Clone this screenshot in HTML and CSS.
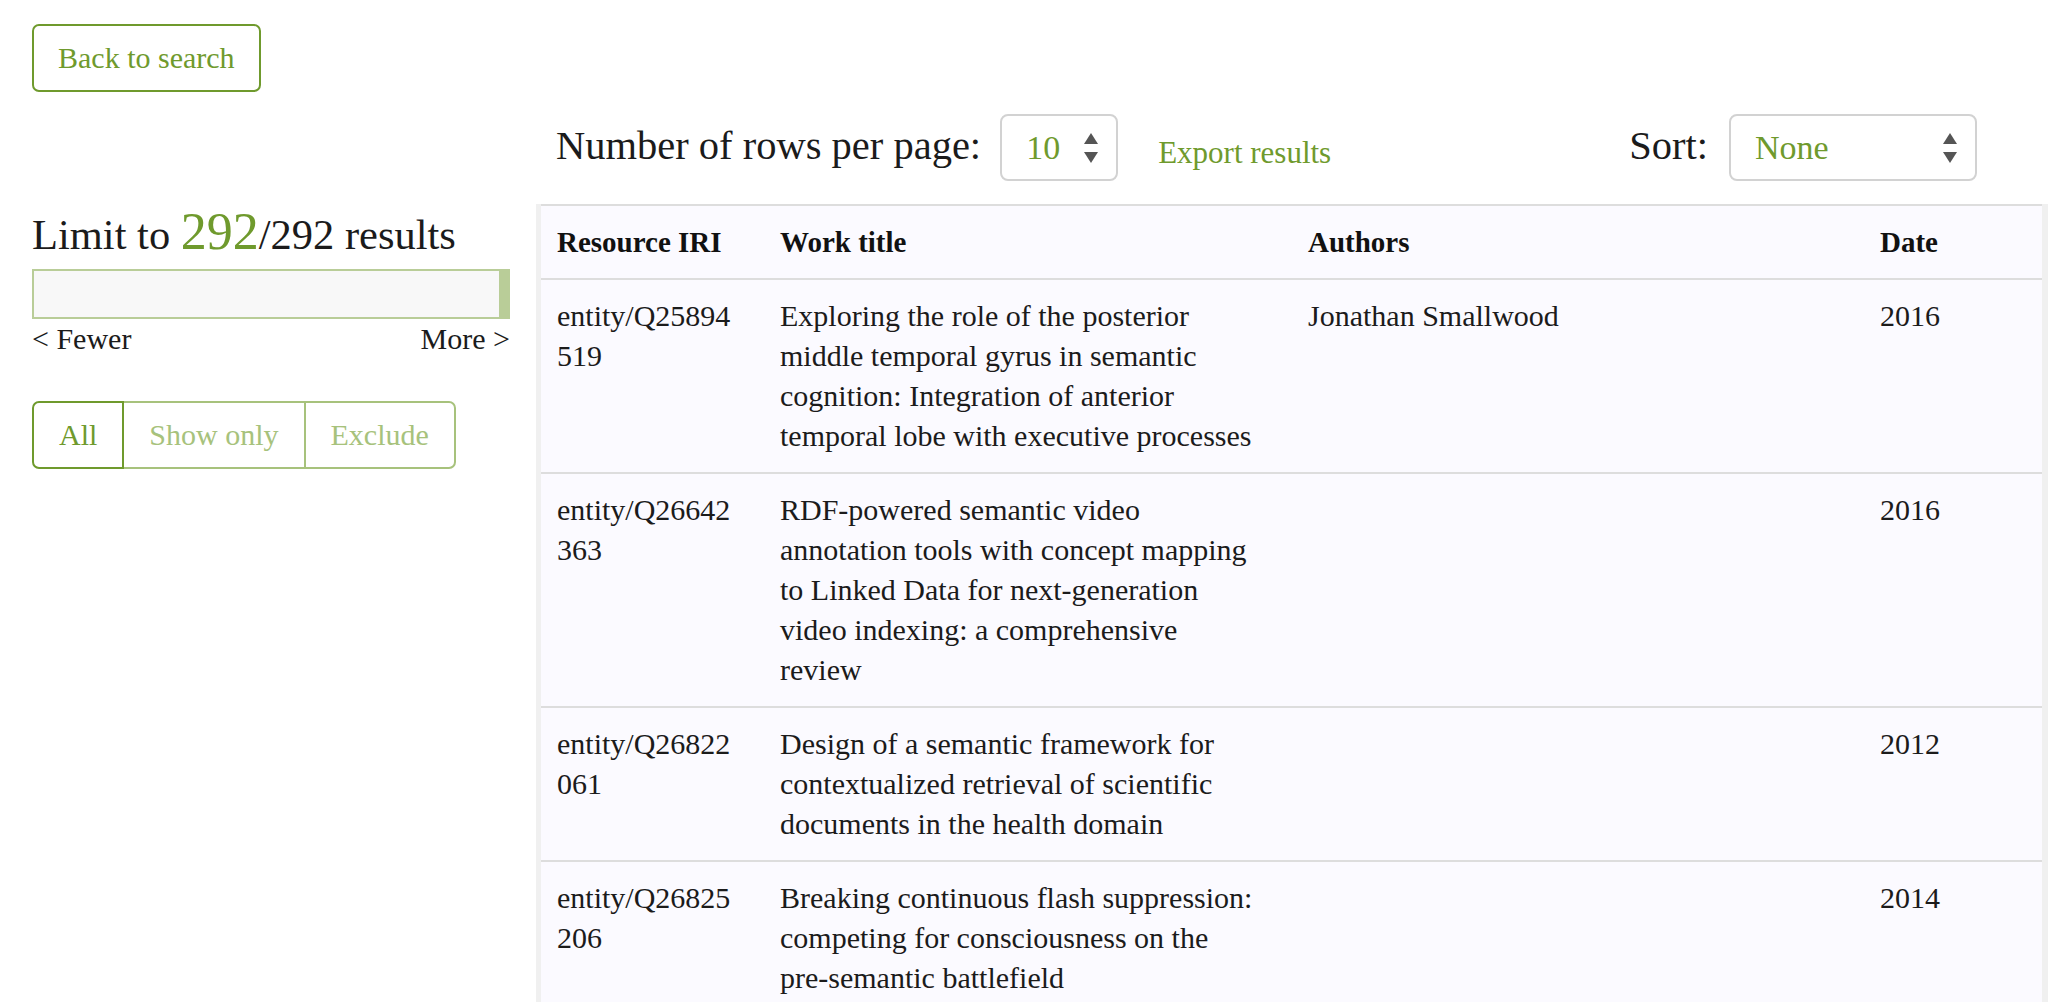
FILE: index.html
```html
<!DOCTYPE html>
<html lang="en">
<head>
<meta charset="utf-8">
<title>Results</title>
<link rel="stylesheet" href="styles.css">
</head>
<body>
<div class="page">
  <a class="btn-back" href="#">Back to search</a>
  <div class="layout">
    <aside class="sidebar">
      <div class="limit">Limit to <span class="limit-num">292</span>/292 results</div>
      <div class="bar"><div class="bar-fill"></div></div>
      <div class="bar-labels"><span>&lt; Fewer</span><span>More &gt;</span></div>
      <div class="seg">
        <button class="seg-btn active">All</button>
        <button class="seg-btn">Show only</button>
        <button class="seg-btn">Exclude</button>
      </div>
    </aside>
    <main class="main">
      <div class="toolbar">
        <span class="tb-label">Number of rows per page:</span>
        <div class="select select-rows">
          <span class="select-value">10</span>
          <svg class="select-arrows" width="14" height="30" viewBox="0 0 14 30"><polygon points="7,0 14,11 0,11"/><polygon points="0,19 14,19 7,30"/></svg>
        </div>
        <a class="export" href="#">Export results</a>
        <span class="tb-label sort-label">Sort:</span>
        <div class="select select-sort">
          <span class="select-value">None</span>
          <svg class="select-arrows" width="14" height="30" viewBox="0 0 14 30"><polygon points="7,0 14,11 0,11"/><polygon points="0,19 14,19 7,30"/></svg>
        </div>
      </div>
      <div class="table-wrap">
        <table class="results">
          <colgroup>
            <col class="c-iri">
            <col class="c-title">
            <col class="c-authors">
            <col class="c-date">
          </colgroup>
          <thead>
            <tr><th>Resource IRI</th><th class="title">Work title</th><th>Authors</th><th>Date</th></tr>
          </thead>
          <tbody>
            <tr>
              <td class="iri">entity/Q25894519</td>
              <td class="title">Exploring the role of the posterior middle temporal gyrus in semantic cognition: Integration of anterior temporal lobe with executive processes</td>
              <td>Jonathan Smallwood</td>
              <td>2016</td>
            </tr>
            <tr>
              <td class="iri">entity/Q26642363</td>
              <td class="title">RDF-powered semantic video annotation tools with concept mapping to Linked Data for next-generation video indexing: a comprehensive review</td>
              <td></td>
              <td>2016</td>
            </tr>
            <tr>
              <td class="iri">entity/Q26822061</td>
              <td class="title">Design of a semantic framework for contextualized retrieval of scientific documents in the health domain</td>
              <td></td>
              <td>2012</td>
            </tr>
            <tr>
              <td class="iri">entity/Q26825206</td>
              <td class="title">Breaking continuous flash suppression: competing for consciousness on the pre-semantic battlefield</td>
              <td></td>
              <td>2014</td>
            </tr>
          </tbody>
        </table>
      </div>
    </main>
  </div>
</div>
</body>
</html>
```

FILE: styles.css
```css
* { box-sizing: border-box; }

html, body {
  margin: 0;
  padding: 0;
  background: #ffffff;
}

body {
  font-family: "Liberation Serif", "Times New Roman", serif;
  font-size: 30px;
  line-height: 40px;
  color: #1b1b1b;
}

.page {
  padding: 24px 18px 0 32px;
}

.btn-back {
  display: inline-block;
  padding: 12px 24px;
  border: 2px solid #6f9a2d;
  border-radius: 7px;
  color: #6f9a2d;
  text-decoration: none;
  font-size: 30px;
  line-height: 40px;
}

.layout {
  display: grid;
  grid-template-columns: 478px 1512px;
  column-gap: 26px;
  align-items: start;
}

/* Sidebar */
.sidebar {
  padding-top: 112px;
}

.limit {
  font-size: 42.5px;
  line-height: 56px;
  white-space: nowrap;
}

.limit-num {
  font-size: 52px;
  color: #6f9a2d;
}

.bar {
  margin-top: 6px;
  height: 50px;
  border: 2px solid #b9cd98;
  background: #f8f8f8;
  display: flex;
  justify-content: flex-end;
}

.bar-fill {
  width: 9px;
  background: #b9cd98;
}

.bar-labels {
  display: flex;
  justify-content: space-between;
  font-size: 30px;
  line-height: 40px;
}

.seg {
  margin-top: 42px;
  display: flex;
}

.seg-btn {
  font-family: inherit;
  font-size: 30px;
  line-height: 40px;
  padding: 12px 25px;
  background: #ffffff;
  color: #a7c27c;
  border: 2px solid #a7c27c;
  margin: 0;
  cursor: pointer;
}

.seg-btn + .seg-btn {
  margin-left: -2px;
}

.seg-btn:first-child {
  border-radius: 7px 0 0 7px;
}

.seg-btn:last-child {
  border-radius: 0 7px 7px 0;
}

.seg-btn.active {
  color: #6f9a2d;
  border-color: #6f9a2d;
  position: relative;
  z-index: 1;
}

/* Main */
.main {
  padding-top: 22px;
}

.toolbar {
  display: flex;
  align-items: baseline;
  padding: 0 71px 0 20px;
}

.tb-label {
  font-size: 40.5px;
  line-height: 40px;
}

.select {
  display: flex;
  align-items: center;
  justify-content: space-between;
  height: 67px;
  border: 2px solid #d2d2d2;
  border-radius: 8px;
  padding: 12px 18px 12px 24px;
  background: #ffffff;
}

.select-value {
  font-size: 34px;
  line-height: 40px;
  color: #6f9a2d;
}

.select-arrows {
  fill: #555555;
  align-self: center;
}

.select-rows {
  width: 118px;
  margin-left: 19px;
}

.select-sort {
  width: 248px;
  margin-left: 21px;
}

.export {
  margin-left: 40px;
  color: #6f9a2d;
  text-decoration: none;
  font-size: 31px;
  position: relative;
  top: 4px;
}

.sort-label {
  margin-left: auto;
}

.table-wrap {
  margin-top: 23px;
  border-left: 5px solid #f0f0f0;
  border-right: 6px solid #f0f0f0;
  background: #fbfaff;
}

.results {
  width: 100%;
  border-collapse: collapse;
  table-layout: fixed;
  background: #fbfaff;
}

.c-iri { width: 223px; }
.c-title { width: 528px; }
.c-authors { width: 572px; }
.c-date { width: 178px; }

.results th,
.results td {
  text-align: left;
  vertical-align: top;
  padding: 16px;
  border-top: 2px solid #dddddd;
  font-size: 30px;
  line-height: 40px;
}

.results th {
  font-weight: bold;
  font-size: 29px;
  color: #111111;
}

.results .title {
  padding-right: 29px;
}

.results .iri {
  word-break: break-all;
  padding-right: 27px;
}
```
